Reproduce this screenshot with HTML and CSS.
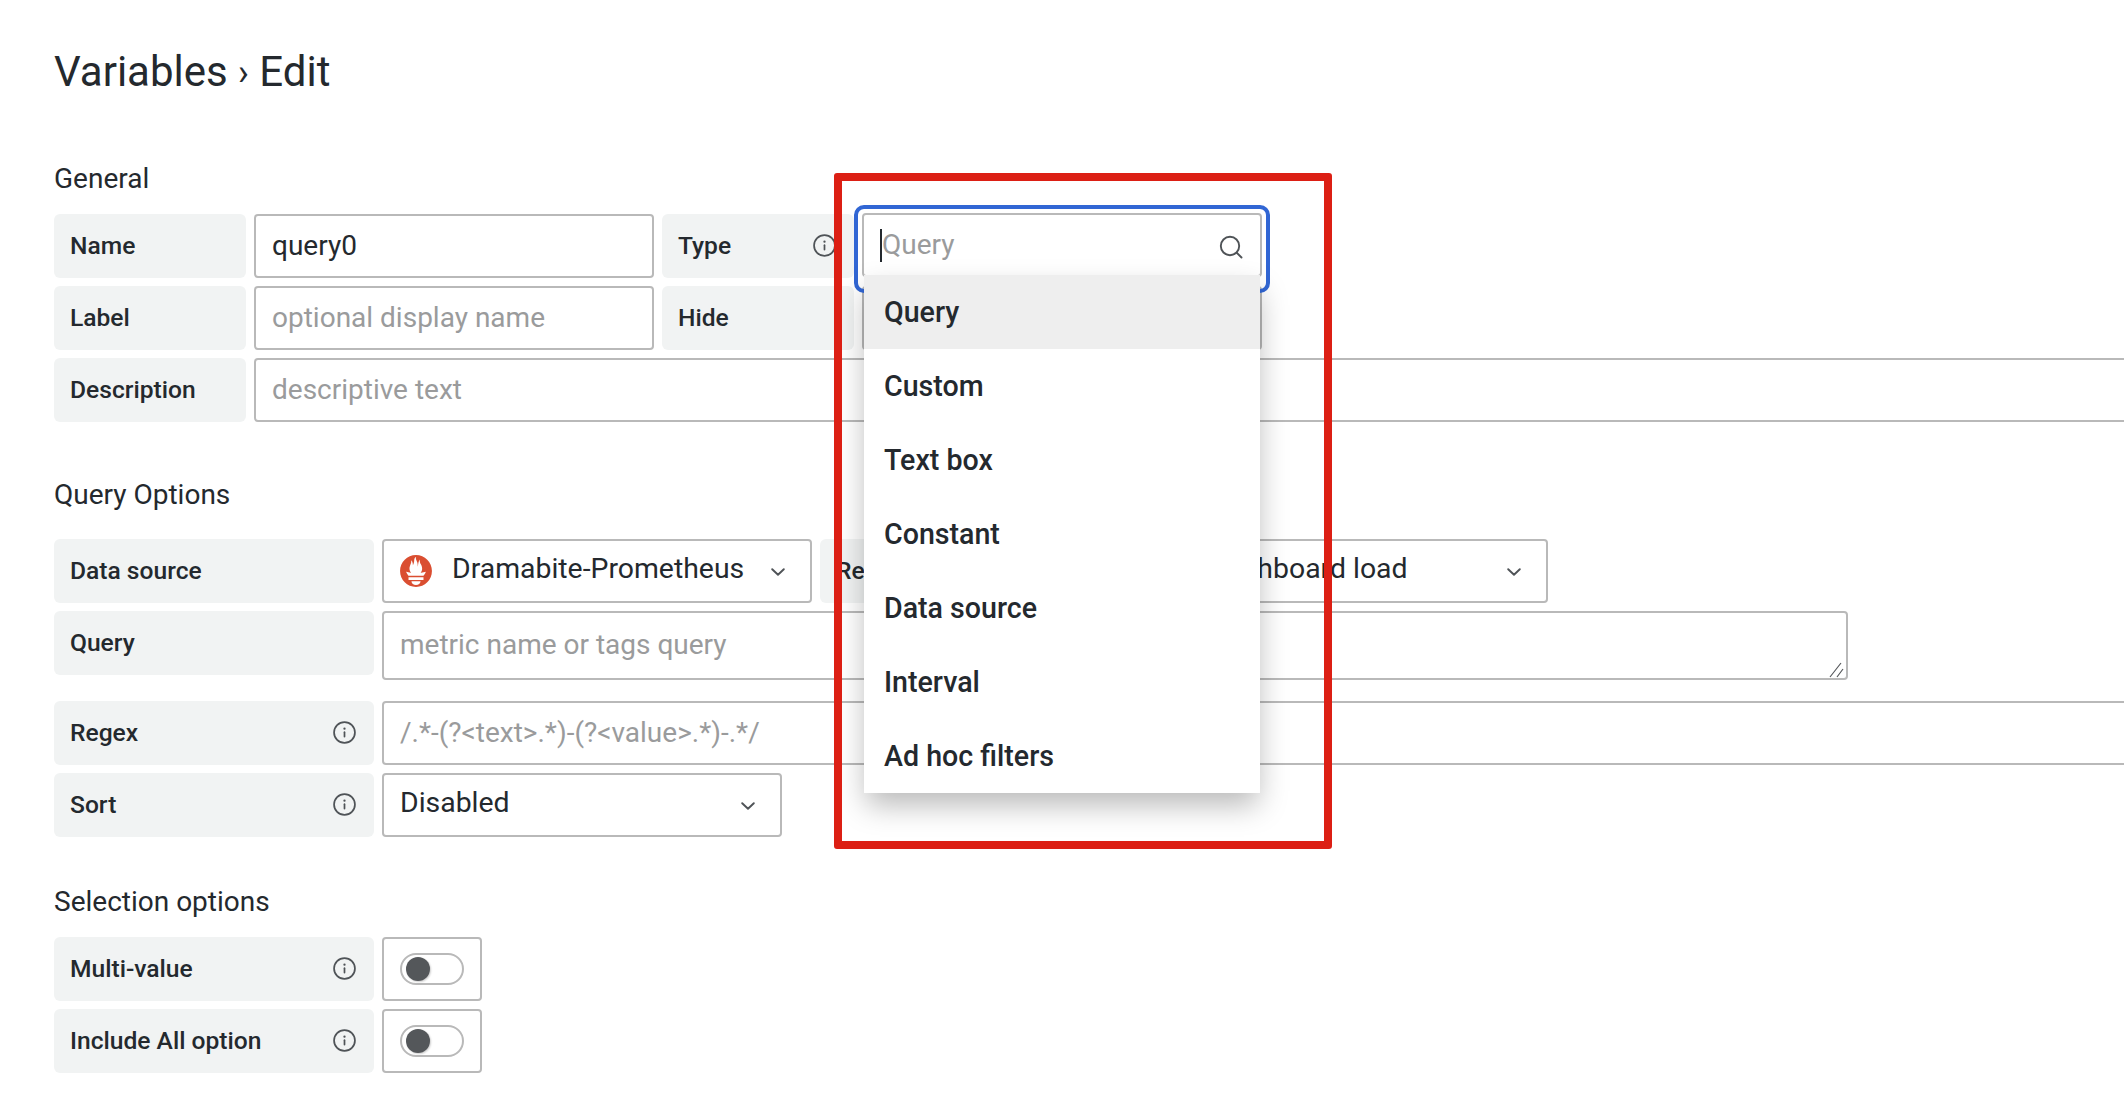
FILE: index.html
```html
<!DOCTYPE html>
<html lang="en">
<head>
<meta charset="utf-8">
<title>Variables - Edit</title>
<link rel="stylesheet" href="styles.css">
</head>
<body>
<svg class="defs" width="0" height="0" aria-hidden="true">
  <symbol id="info" viewBox="0 0 24 24">
    <circle cx="12" cy="12" r="10.900" fill="none" stroke="currentColor" stroke-width="1.800"/>
    <circle cx="12" cy="8" r="1.200" fill="currentColor"/>
    <rect x="11.100" y="10.800" width="1.800" height="6.400" rx=".9" fill="currentColor"/>
  </symbol>
  <symbol id="chev" viewBox="0 0 14 8">
    <path d="M1.2 1.2 7 6.8l5.8-5.6" fill="none" stroke="currentColor" stroke-width="1.9" stroke-linecap="round" stroke-linejoin="round"/>
  </symbol>
</svg>
<main class="page">
  <h1 class="title">Variables <span class="crumb">›</span> Edit</h1>

  <section class="section general">
    <h2 class="heading">General</h2>
    <div class="row">
      <div class="label w192">Name</div>
      <input class="field w400" value="query0">
      <div class="label w192">Type<svg class="info"><use href="#info"/></svg></div>
    </div>
    <div class="row">
      <div class="label w192">Label</div>
      <input class="field w400" placeholder="optional display name">
      <div class="label w192">Hide</div>
      <div class="field w400"></div>
    </div>
    <div class="row">
      <div class="label w192">Description</div>
      <input class="field wide" placeholder="descriptive text">
    </div>
  </section>

  <section class="section options">
    <h2 class="heading heading-loose">Query Options</h2>
    <div class="row">
      <div class="label w320">Data source</div>
      <div class="field select w430">
        <svg class="prom" viewBox="0 0 256 257"><path fill="#da4e31" d="M128 .7C57.3.7 0 58 0 128.700s57.300 128 128 128 128-57.300 128-128S198.700.7 128 .7zm0 239.500c-20.100 0-36.400-13.400-36.400-30h72.800c0 16.600-16.300 30-36.400 30zm60.200-39.900H67.800v-21.800h120.400v21.800zm-.5-33H68.200c-.4-.5-.8-.9-1.200-1.400-12.300-15-15.200-22.800-18-30.700-.1-.3 14.900 3 25.500 5.400 0 0 5.500 1.300 13.500 2.700-7.700-9-12.200-20.400-12.200-32.100 0-25.700 19.700-48.100 12.600-66.200 6.900.6 14.300 14.600 14.800 36.500 7.300-10.100 10.400-28.700 10.400-40 0-11.800 7.800-25.500 15.500-25.900-6.900 11.400 1.800 21.100 9.500 45.400 2.900 9.100 2.500 24.400 4.800 34.100.7-20.200 4.200-49.600 17-59.800-5.600 12.800.8 28.800 5.300 36.500 7.100 12.400 11.500 21.800 11.500 39.600 0 11.900-4.400 23.200-11.800 32 8.400-1.600 14.300-3 14.300-3l27.400-5.400s-4 16.400-19.300 32.200z"/></svg>
        <span class="select-text">Dramabite-Prometheus</span>
        <svg class="chev"><use href="#chev"/></svg>
      </div>
      <div class="label w323">Refresh</div>
      <div class="field select w397">
        <span class="select-text">On dashboard load</span>
        <svg class="chev"><use href="#chev"/></svg>
      </div>
    </div>
    <div class="row row-query">
      <div class="label w320">Query</div>
      <div class="area-wrap">
        <textarea class="field area" placeholder="metric name or tags query"></textarea>
        <svg class="grip" viewBox="0 0 15 16"><path d="M1 15 12 1M8 15l6-8" fill="none" stroke="#55585b" stroke-width="1.200"/></svg>
      </div>
    </div>
    <div class="row">
      <div class="label w320">Regex<svg class="info"><use href="#info"/></svg></div>
      <input class="field wide regex" placeholder="/.*-(?&lt;text&gt;.*)-(?&lt;value&gt;.*)-.*/">
    </div>
    <div class="row">
      <div class="label w320">Sort<svg class="info"><use href="#info"/></svg></div>
      <div class="field select w400">
        <span class="select-text">Disabled</span>
        <svg class="chev"><use href="#chev"/></svg>
      </div>
    </div>
  </section>

  <section class="section selection">
    <h2 class="heading">Selection options</h2>
    <div class="row">
      <div class="label w320">Multi-value<svg class="info"><use href="#info"/></svg></div>
      <div class="field toggle-box"><span class="toggle"><span class="knob"></span></span></div>
    </div>
    <div class="row">
      <div class="label w320">Include All option<svg class="info"><use href="#info"/></svg></div>
      <div class="field toggle-box"><span class="toggle"><span class="knob"></span></span></div>
    </div>
  </section>
</main>

<div class="type-picker">
  <div class="search">
    <span class="caret"></span><span class="search-hint">Query</span>
    <svg class="search-icon" viewBox="0 0 24 24"><circle cx="11" cy="11" r="9.200" fill="none" stroke="currentColor" stroke-width="1.900"/><path d="m18 18 4.500 4.500" fill="none" stroke="currentColor" stroke-width="1.900" stroke-linecap="round"/></svg>
  </div>
  <ul class="menu">
    <li class="item active">Query</li>
    <li class="item">Custom</li>
    <li class="item">Text box</li>
    <li class="item">Constant</li>
    <li class="item">Data source</li>
    <li class="item">Interval</li>
    <li class="item">Ad hoc filters</li>
  </ul>
</div>
<div class="callout"></div>
</body>
</html>
```
FILE: styles.css
```css
* { box-sizing: border-box; }
html, body { margin: 0; width: 2124px; height: 1102px; overflow: hidden; background: #fff; }
body { font-family: Roboto, "Liberation Sans", sans-serif; color: #24292e; position: relative; }
.defs { position: absolute; }
.page { padding: 48px 0 0 54px; width: 2124px; overflow: hidden; }
.title { margin: 0; font-size: 42px; line-height: 48px; font-weight: 400; }
.crumb { font-size: 36px; vertical-align: 1px; }
.section { display: flex; flex-direction: column; }
.general { margin-top: 67px; }
.options { margin-top: 50px; }
.selection { margin-top: 42px; }
.heading { margin: 0 0 20px; font-size: 28px; line-height: 30px; font-weight: 400; }
.heading-loose { margin-bottom: 29px; }
.row { display: flex; gap: 8px; margin-bottom: 8px; align-items: flex-start; }
.row-query { margin-bottom: 21px; }
.label { height: 64px; flex: none; display: flex; align-items: center; justify-content: space-between; padding: 0 18px 2px 16px; background: #f1f3f3; border-radius: 6px; font-size: 24.6px; font-weight: 500; }
.w192 { width: 192px; }
.w320 { width: 320px; }
.w323 { width: 323px; }
.w400 { width: 400px; }
.w430 { width: 430px; }
.w397 { width: 397px; }
.field { height: 64px; flex: none; display: block; padding: 0 16px 1px; margin: 0; background: #fff; border: 2px solid #b9b9b9; border-radius: 4px; font: 400 28px Roboto, sans-serif; color: #24292e; outline: none; }
.field::placeholder { color: #9a9b9c; opacity: 1; }
.wide { width: 1900px; }
.area-wrap { position: relative; flex: none; height: 69px; }
.area { width: 1466px; height: 69px; padding: 15px 16px; line-height: 34px; resize: none; }
.grip { position: absolute; right: 4px; bottom: 2px; width: 15px; height: 16px; }
.select { display: flex; align-items: center; padding-bottom: 0; }
.select-text { flex: 1; white-space: nowrap; line-height: 1; padding-bottom: 4px; font-size: 28.4px; }
.prom { width: 32px; height: 32px; margin-right: 20px; flex: none; }
.info { width: 23px; height: 23px; color: #4f5357; flex: none; }
.chev { width: 14px; height: 8px; color: #4f5357; flex: none; margin: 2px 9px 0 0; }
.toggle-box { width: 100px; display: flex; align-items: center; padding-bottom: 0; }
.toggle { width: 65px; height: 32px; border: 2px solid #b9b9b9; border-radius: 16px; display: flex; align-items: center; padding-left: 4px; }
.knob { width: 24px; height: 24px; border-radius: 50%; background: #54575a; box-shadow: 1px 1px 2px rgba(0,0,0,.2); }
.type-picker { position: absolute; left: 862px; top: 213px; width: 400px; }
.type-picker::before { content: ""; position: absolute; inset: -8px -8px auto; height: 80px; border: 4px solid #3166d4; border-radius: 10px; }
.search { position: relative; height: 64px; display: flex; align-items: center; padding: 0 16px; background: #fff; border: 2px solid #b9b9b9; border-radius: 4px; font-size: 28px; color: #9a9b9c; }
.caret { width: 2px; height: 33px; background: #24292e; flex: none; }
.search-hint { flex: 1; padding-bottom: 2px; }
.search-icon { width: 24px; height: 24px; color: #4f5357; flex: none; margin: 3px 1px 0 0; }
.menu { position: absolute; left: 2px; top: 62px; width: 396px; margin: 0; padding: 0; list-style: none; background: #fff; box-shadow: 0 14px 28px -2px rgba(0,0,0,.28); }
.item { height: 74px; display: flex; align-items: center; padding: 0 20px; font-size: 28.6px; font-weight: 500; }
.active { background: #eee; }
.callout { position: absolute; left: 834px; top: 173px; width: 498px; height: 676px; border: 8px solid #dc1f14; border-radius: 3px; }
```
